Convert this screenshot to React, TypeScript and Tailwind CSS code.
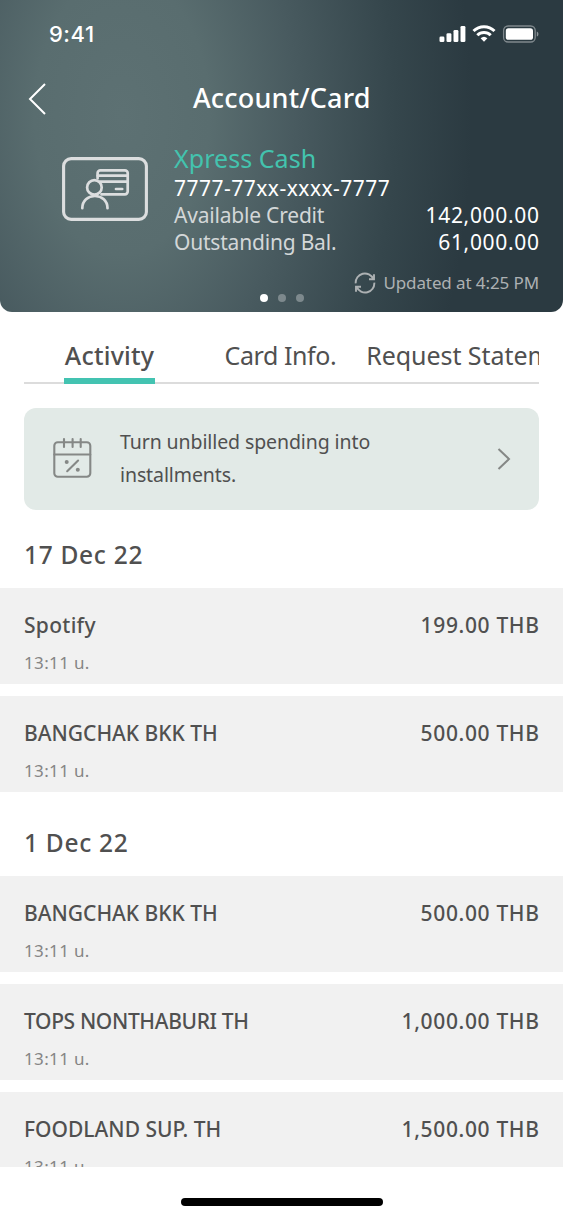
type Transaction = {
  id: number;
  name: string;
  amount: string;
  time: string;
  nameClass?: string;
};

type Day = {
  date: string;
  transactions: Transaction[];
};

const days: Day[] = [
  {
    date: "17 Dec 22",
    transactions: [
      { id: 1, name: "Spotify", amount: "199.00 THB", time: "13:11 u.", nameClass: "tracking-[0.3px]" },
      { id: 2, name: "BANGCHAK BKK TH", amount: "500.00 THB", time: "13:11 u." },
    ],
  },
  {
    date: "1 Dec 22",
    transactions: [
      { id: 3, name: "BANGCHAK BKK TH", amount: "500.00 THB", time: "13:11 u." },
      { id: 4, name: "TOPS NONTHABURI TH", amount: "1,000.00 THB", time: "13:11 u.", nameClass: "tracking-[-0.35px]" },
      { id: 5, name: "FOODLAND SUP. TH", amount: "1,500.00 THB", time: "13:11 u." },
    ],
  },
];

function StatusBar() {
  return (
    <div className="flex h-[68px] items-center justify-between pr-6 pl-[49px] text-white">
      <span className="font-['Inter'] text-[22px] font-medium tracking-[0.5px]">9:41</span>
      <svg width="102" height="18" viewBox="0 0 102 18" fill="currentColor">
        <rect x="2.5" y="11.5" width="4.9" height="5.5" rx="1.3" />
        <rect x="9.5" y="8.3" width="4.9" height="8.7" rx="1.3" />
        <rect x="16.5" y="5" width="4.9" height="12" rx="1.3" />
        <rect x="23.5" y="1" width="4.9" height="16" rx="1.3" />
        <g fill="none" stroke="currentColor" strokeWidth="3">
          <path d="M36.5 6a15 15 0 0 1 21 0" />
          <path d="M40.3 10.3a9.6 9.6 0 0 1 13.4 0" />
        </g>
        <path d="M43.6 13.3a5 5 0 0 1 6.8 0L47 16.7z" />
        <rect x="66.6" y="1" width="31.6" height="16" rx="4.5" fill="none" stroke="currentColor" strokeOpacity="0.4" strokeWidth="1.3" />
        <rect x="68.8" y="3.2" width="27.2" height="11.6" rx="2.6" />
        <path d="M99.8 6.4v5.2c2.2-.9 2.2-4.3 0-5.2z" fillOpacity="0.45" />
      </svg>
    </div>
  );
}

function CardIcon() {
  return (
    <svg width="86" height="64" viewBox="0 0 86 64" fill="none" stroke="#dcdedf" strokeWidth="2.7" strokeLinecap="round">
      <rect x="1.6" y="1.6" width="82.8" height="60.8" rx="7.5" strokeWidth="3.1" />
      <path d="M35.6 21.5v-5.4a2.8 2.8 0 0 1 2.8-2.8h24.5a2.8 2.8 0 0 1 2.8 2.8v18.5a2.8 2.8 0 0 1-2.8 2.8H39.5" />
      <path d="M35.7 18.7h30M37.8 24.7h27.9M54 32h6.2" />
      <circle cx="32.4" cy="30.4" r="7.3" />
      <path d="M20.3 51.2C20.3 43.6 26 39 32.9 39s12.6 4.6 12.6 12.2" />
    </svg>
  );
}

function RefreshIcon() {
  return (
    <svg width="22" height="22" viewBox="0 0 22 22" fill="none" stroke="currentColor" strokeWidth="1.9">
      <path d="M1.7 11.4A9.2 9.2 0 0 1 19.3 7M20.3 10.6A9.2 9.2 0 0 1 2.7 15" />
      <path d="M20 2.2v5h-5M2 19.8v-5h5" />
    </svg>
  );
}

function CalendarIcon() {
  return (
    <svg width="40" height="44" viewBox="0 0 40 44" fill="none" stroke="#858886" strokeWidth="2.1" strokeLinecap="round">
      <rect x="2.3" y="5.2" width="36" height="34.6" rx="3.5" />
      <path d="M2.3 17.5h36M12 2v8M20.6 2v8M28.7 2v8M15.2 34.2l10.9-10.7" />
      <circle cx="14.7" cy="24.9" r="2" fill="#858886" stroke="none" />
      <circle cx="25.8" cy="32.8" r="2" fill="#858886" stroke="none" />
    </svg>
  );
}

function Header() {
  return (
    <header className="relative h-[312px] rounded-b-xl bg-[radial-gradient(ellipse_350px_560px_at_122px_115px,#5d7173_0%,#596d6f_25%,#485a5f_50%,#35464c_78%,#2b3a41_100%)]">
      <StatusBar />
      <div className="flex h-[60px] items-center">
        <svg className="mt-0.5 ml-7" width="20" height="32" viewBox="0 0 20 32" fill="none" stroke="white" strokeWidth="2">
          <path d="M17 1 2 16l15 15" />
        </svg>
        <h1 className="ml-[145px] text-[27px] font-medium tracking-[0.18px] text-white">Account/Card</h1>
      </div>
      <div className="flex pt-[15px] pr-6 pl-[62px]">
        <div className="mt-[14px] mr-[26px]">
          <CardIcon />
        </div>
        <div className="flex-1 text-[21px] leading-[27px] text-white">
          <div className="mb-0.5 text-[25px] leading-[30px] tracking-[0.05px] text-[#43c3ae]">Xpress Cash</div>
          <div className="tracking-[0.49px]">7777-77xx-xxxx-7777</div>
          <div className="flex justify-between">
            <span className="tracking-[-0.2px] text-[#d3d7d8]">Available Credit</span>
            <span className="-mr-[0.6px] tracking-[0.67px]">142,000.00</span>
          </div>
          <div className="flex justify-between">
            <span className="tracking-[-0.2px] text-[#d3d7d8]">Outstanding Bal.</span>
            <span className="-mr-[0.6px] tracking-[0.67px]">61,000.00</span>
          </div>
        </div>
      </div>
      <div className="flex h-[54px] items-center justify-end gap-[7px] pr-6 text-[17px] tracking-[-0.1px] text-[#adb1b3]">
        <RefreshIcon />
        <span>Updated at 4:25 PM</span>
      </div>
      <div className="absolute bottom-[10px] left-[259.5px] flex gap-[10px]">
        <span className="size-2 rounded-full bg-white" />
        <span className="size-2 rounded-full bg-[#7d898d]" />
        <span className="size-2 rounded-full bg-[#7d898d]" />
      </div>
    </header>
  );
}

function Tabs() {
  return (
    <nav className="mx-6 mt-4 flex h-14 overflow-hidden text-[25px] leading-[54px] tracking-[-0.42px] whitespace-nowrap text-[#505050] shadow-[inset_0_-2px_#dcdcdc]">
      <span className="ml-10 h-14 w-[91px] shrink-0 border-b-[6px] border-[#43c3b1] text-center font-medium tracking-[0.2px]">Activity</span>
      <span className="ml-[69.5px]">Card Info.</span>
      <span className="ml-[30px] tracking-[-0.05px]">Request Statement</span>
    </nav>
  );
}

function Banner() {
  return (
    <div className="mx-6 mt-6 flex h-[102px] items-center rounded-xl bg-[#e2eae7] px-7">
      <CalendarIcon />
      <p className="-mt-0.5 ml-7 w-72 text-[19.5px] leading-[33px] tracking-[-0.1px] text-[#505050]">
        Turn unbilled spending into installments.
      </p>
      <svg className="ml-auto" width="14" height="24" viewBox="0 0 14 24" fill="none" stroke="#858886" strokeWidth="2">
        <path d="m1.5 2 10.5 10-10.5 10" />
      </svg>
    </div>
  );
}

function TransactionRow({ transaction }: { transaction: Transaction }) {
  return (
    <div className="h-24 bg-[#f1f1f1] px-6 pt-[21px]">
      <div className="flex justify-between text-[21px] leading-8 font-medium text-[#505050]">
        <span className={transaction.nameClass}>{transaction.name}</span>
        <span className="-mr-[0.6px] tracking-[0.65px]">{transaction.amount}</span>
      </div>
      <div className="mt-[9px] text-[17px] leading-[26px] tracking-[0.35px] text-[#858585]">{transaction.time}</div>
    </div>
  );
}

export default function App() {
  return (
    <div className="flex h-[1218px] w-[563px] flex-col overflow-hidden bg-white font-['Noto_Sans',sans-serif]">
      <Header />
      <Tabs />
      <Banner />
      <main className="flex h-[657px] flex-col gap-1.5 overflow-hidden">
        {days.map((day) => (
          <section key={day.date}>
            <h2 className="h-[78px] px-6 pt-[27px] text-[24.5px] leading-9 font-medium tracking-[0.7px] text-[#505050]">{day.date}</h2>
            <div className="flex flex-col gap-3">
              {day.transactions.map((transaction) => (
                <TransactionRow key={transaction.id} transaction={transaction} />
              ))}
            </div>
          </section>
        ))}
      </main>
      <div className="mx-auto mt-[31px] h-2 w-[202px] rounded-full bg-black" />
    </div>
  );
}
